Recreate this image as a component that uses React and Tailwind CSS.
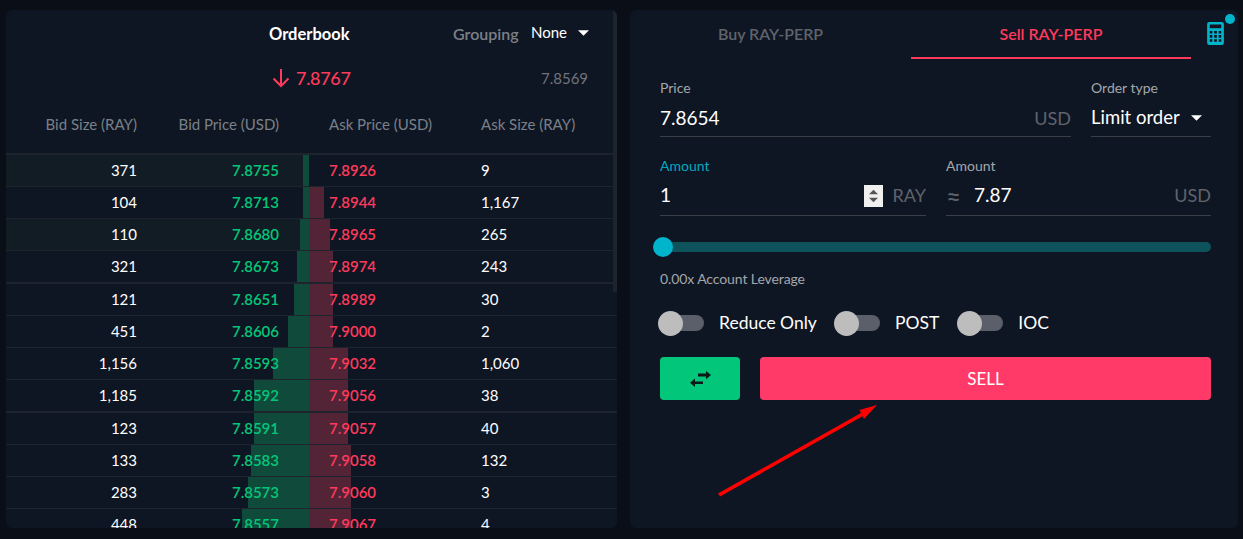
import React from 'react';

const rows = [
  { bidSize: '371', bid: '7.8755', ask: '7.8926', askSize: '9', g: 6, r: 0, tint: true, h: 'h-[31px]', first: true },
  { bidSize: '104', bid: '7.8713', ask: '7.8944', askSize: '1,167', g: 6, r: 15, h: 'h-8' },
  { bidSize: '110', bid: '7.8680', ask: '7.8965', askSize: '265', g: 9, r: 21, tint: true, h: 'h-8' },
  { bidSize: '321', bid: '7.8673', ask: '7.8974', askSize: '243', g: 12, r: 24, h: 'h-8' },
  { bidSize: '121', bid: '7.8651', ask: '7.8989', askSize: '30', g: 15, r: 24, thick: true, h: 'h-[33px]' },
  { bidSize: '451', bid: '7.8606', ask: '7.9000', askSize: '2', g: 21, r: 24, h: 'h-8' },
  { bidSize: '1,156', bid: '7.8593', ask: '7.9032', askSize: '1,060', g: 36, r: 39, h: 'h-8' },
  { bidSize: '1,185', bid: '7.8592', ask: '7.9056', askSize: '38', g: 55, r: 39, h: 'h-8' },
  { bidSize: '123', bid: '7.8591', ask: '7.9057', askSize: '40', g: 55, r: 39, thick: true, h: 'h-[33px]' },
  { bidSize: '133', bid: '7.8583', ask: '7.9058', askSize: '132', g: 58, r: 42, h: 'h-8' },
  { bidSize: '283', bid: '7.8573', ask: '7.9060', askSize: '3', g: 61, r: 42, h: 'h-8' },
  { bidSize: '448', bid: '7.8557', ask: '7.9067', askSize: '4', g: 67, r: 42, h: 'h-8' },
];

function Caret({ className }) {
  return (
    <svg viewBox="0 0 12 6" className={className} fill="currentColor">
      <path d="M0 0h12L6 6z" />
    </svg>
  );
}

function Toggle({ label, className }) {
  return (
    <div className={`flex items-center ${className}`}>
      <div className="relative w-[44px] h-4 ml-0.5 rounded-full bg-[#5b5f69]">
        <div className="absolute -left-0.5 top-[-4.5px] w-[25px] h-[25px] rounded-full bg-[#bdbdbd]" />
      </div>
      <span className="ml-[15px] text-[17.5px] text-white">{label}</span>
    </div>
  );
}

export default function App() {
  return (
    <div
      className="relative flex w-[1243px] h-[539px] overflow-hidden bg-[#0a0e17] pt-2.5 pb-[11px] pl-1.5 pr-[5px] gap-[13px]"
      style={{ fontFamily: 'Lato, "Noto Sans", sans-serif' }}
    >
      {/* Orderbook */}
      <div className="relative w-[611px] rounded-md bg-[#0f1623] overflow-hidden flex flex-col">
        <div className="absolute right-0 top-0 w-1 h-[282px] bg-[#1e242e]" />

        <div className="relative h-12 shrink-0">
          <span className="absolute left-[263px] top-[14px] text-[16.5px] leading-5 font-bold text-white">Orderbook</span>
          <span className="absolute left-[447px] top-[14px] text-[16px] leading-5 font-semibold text-[#7b8088]">Grouping</span>
          <span className="absolute left-[525px] top-3 text-[15px] leading-5 text-white">None</span>
          <Caret className="absolute left-[572px] top-[20px] w-[11px] h-[6px] text-white" />
        </div>

        <div className="relative h-[40px] shrink-0">
          <svg viewBox="0 0 20 20" className="absolute left-[265px] top-[10px] w-5 h-5 text-[#ff3a5c]" fill="none" stroke="currentColor" strokeWidth="2">
            <path d="M10 1v17M2.500 10.500 10 18l7.500-7.500" />
          </svg>
          <span className="absolute left-[290px] top-[8px] text-[18px] tracking-[-0.3px] leading-6 font-medium text-[#ff3a5c]">7.8767</span>
          <span className="absolute left-[535px] top-[10px] text-[15px] leading-5 text-[#6f737b]">7.8569</span>
        </div>

        <div className="flex items-center h-[57px] pb-0.5 shrink-0 text-[15px] text-[#7b8088] border-b-2 border-[#1e242e]">
          <span className="w-[131px] text-right">Bid Size (RAY)</span>
          <span className="w-[142px] text-right">Bid Price (USD)</span>
          <span className="ml-[50px] w-[152px]">Ask Price (USD)</span>
          <span>Ask Size (RAY)</span>
        </div>

        {rows.map((row) => (
          <div
            key={row.bid}
            className={`relative flex items-center shrink-0 text-[15px] ${row.h} ${row.first ? '' : row.thick ? 'border-t-2 border-[#1e242e]' : 'border-t border-[#1e242e]'}`}
          >
            {row.tint && <div className="absolute left-0 top-0 bottom-0 w-[297px] bg-[#111c25]" />}
            <div className="absolute top-0 bottom-0 right-[308px] bg-[#0f4a3a]" style={{ width: row.g }} />
            <div className="absolute top-0 bottom-0 left-[303px] bg-[#522435]" style={{ width: row.r }} />
            <span className="relative w-[131px] text-right text-white">{row.bidSize}</span>
            <span className="relative w-[142px] text-right font-semibold text-[#02c77a]">{row.bid}</span>
            <span className="relative ml-[50px] w-[152px] font-semibold text-[#ff3a5c]">{row.ask}</span>
            <span className="relative text-white">{row.askSize}</span>
          </div>
        ))}
      </div>

      {/* Order form */}
      <div className="relative flex-1 rounded-md bg-[#0f1623] overflow-hidden pl-[30px] pr-[27px]">
        <div className="flex -ml-[30px] w-[561px] h-[49px] text-[16px] font-semibold">
          <div className="w-[281px] h-full pb-[2px] flex items-center justify-center text-[#5f636b]">Buy RAY-PERP</div>
          <div className="w-[280px] h-full flex items-center justify-center text-[#ff3a5c] border-b-2 border-[#ff3a5c]">Sell RAY-PERP</div>
        </div>

        {/* calculator */}
        <svg viewBox="0 0 16 22" className="absolute left-[577px] top-[12px] w-[17px] h-[23px] text-[#00b4cc]" fill="currentColor">
          <path
            fillRule="evenodd"
            d="M2 0h12a2 2 0 0 1 2 2v18a2 2 0 0 1-2 2H2a2 2 0 0 1-2-2V2a2 2 0 0 1 2-2zM2.500 2.500v3.500h11V2.500zM2.500 8.500v2.500h2.500V8.500zM6.700 8.500v2.500h2.600V8.500zM11 8.500v2.500h2.500V8.500zM2.500 12.500v2.500h2.500v-2.500zM6.700 12.500v2.500h2.600v-2.500zM11 12.500v2.500h2.500v-2.500zM2.500 16.500v2.500h2.500v-2.500zM6.700 16.500v2.500h2.600v-2.500zM11 16.500v2.500h2.500v-2.500z"
          />
        </svg>
        <div className="absolute left-[595px] top-[4px] w-2.5 h-2.5 rounded-full bg-[#00b4cc]" />

        {/* price row */}
        <div className="flex gap-5 mt-[20px]">
          <div className="w-[411px]">
            <div className="text-[14px] leading-[18px] text-[#a3a6ab]">Price</div>
            <div className="flex items-center justify-between h-[34px] pt-[3px] mt-[1px] border-b border-[#3a3e47] box-content pb-[1px]">
              <span className="text-[19px] text-white">7.8654</span>
              <span className="text-[18px] text-[#5f636b]">USD</span>
            </div>
          </div>
          <div className="w-[120px]">
            <div className="text-[14px] leading-[18px] text-[#a3a6ab]">Order type</div>
            <div className="flex items-center justify-between h-[34px] pt-[3px] mt-[1px] border-b border-[#3a3e47] box-content pb-[1px]">
              <span className="text-[18.5px] text-white">Limit order</span>
              <Caret className="w-[11px] h-[6px] mr-[9px] text-white" />
            </div>
          </div>
        </div>

        {/* amount row */}
        <div className="flex gap-5 mt-5">
          <div className="w-[266px]">
            <div className="text-[14px] leading-[18px] text-[#00a9c0]">Amount</div>
            <div className="flex items-center h-[37px] pt-[1px] mt-[1px] border-b border-[#3a3e47] box-content pb-[1px]">
              <span className="flex-1 text-[19px] text-white">1</span>
              <div className="flex flex-col items-center justify-center gap-[2px] w-[19px] h-[22px] bg-[#f0f0f0] mr-2.5">
                <Caret className="w-[9px] h-[6px] text-[#555] rotate-180" />
                <Caret className="w-[9px] h-[6px] text-[#555]" />
              </div>
              <span className="text-[18px] text-[#5f636b]">RAY</span>
            </div>
          </div>
          <div className="w-[265px]">
            <div className="text-[14px] leading-[18px] text-[#a3a6ab]">Amount</div>
            <div className="flex items-center h-[37px] pt-[1px] mt-[1px] border-b border-[#3a3e47] box-content pb-[1px]">
              <span className="w-7 text-[26px] leading-none text-[#5f636b]">≈</span>
              <span className="flex-1 text-[19px] text-white">7.87</span>
              <span className="text-[18px] text-[#5f636b]">USD</span>
            </div>
          </div>
        </div>

        {/* slider */}
        <div className="relative h-2.5 mt-[26px] rounded-full bg-[#0e525c]">
          <div className="absolute -left-[7px] -top-[5px] w-5 h-5 rounded-full bg-[#00b4cc]" />
        </div>

        <div className="mt-[18px] text-[14px] tracking-[-0.1px] leading-[18px] text-[#a3a6ab]">0.00x Account Leverage</div>

        <div className="flex items-center h-6 mt-[23px] -ml-0.5">
          <Toggle label="Reduce Only" />
          <Toggle label="POST" className="ml-[17px]" />
          <Toggle label="IOC" className="ml-[18px]" />
        </div>

        <div className="flex gap-5 mt-[22px]">
          <button className="flex items-center justify-center w-20 h-[43px] rounded bg-[#02c77a]">
            <svg viewBox="0 0 21 16" className="w-[21px] h-4 text-[#0b1a17]" fill="currentColor">
              <path d="M8 2.500h8V0l5 4-5 4.300V5.500H8zM13 13H5v3l-5-4.300L5 7.500v3h8z" />
            </svg>
          </button>
          <button className="flex-1 h-[43px] rounded bg-[#ff3a69] text-[17px] text-white">SELL</button>
        </div>
      </div>

      {/* annotation arrow */}
      <svg className="absolute left-[710px] top-[400px] w-[180px] h-[105px] text-[#ff0000]" viewBox="0 0 180 105" fill="currentColor">
        <path d="M8 93.500l2 3L153 16l-2-3z" />
        <path d="M167 5l-17.500 5 4.500 9z" />
      </svg>
    </div>
  );
}
